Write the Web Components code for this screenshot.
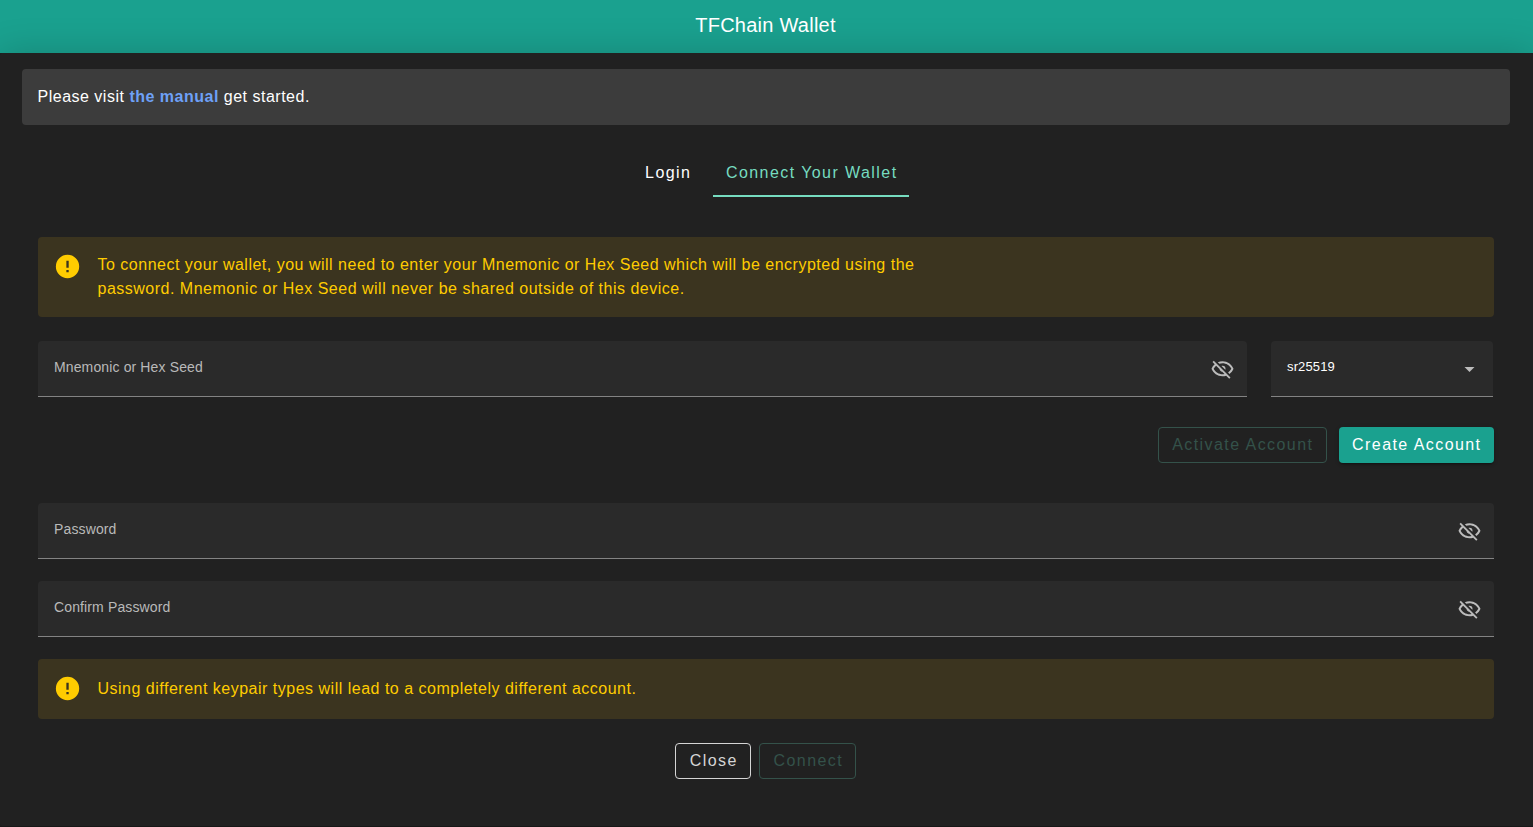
<!DOCTYPE html>
<html lang="en">
<head>
<meta charset="utf-8">
<title>TFChain Wallet</title>
<style>
html,body{margin:0;height:100%;background:#212121}
body{font-family:"Liberation Sans",Arial,sans-serif;color:#fff;overflow:hidden}
</style>
</head>
<body>
<wallet-app></wallet-app>
<script>
const define = (name, css, html) => customElements.define(name, class extends HTMLElement {
  constructor() {
    super();
    const t = document.createElement('template');
    t.innerHTML = `<style>*{box-sizing:border-box}:host{box-sizing:border-box}${css}</style>${typeof html === 'function' ? html(this) : html}`;
    this.attachShadow({ mode: 'open' }).append(t.content.cloneNode(true));
  }
});

const icons = {
  alert: 'M13,13H11V7H13M13,17H11V15H13M12,2A10,10 0 0,0 2,12A10,10 0 0,0 12,22A10,10 0 0,0 22,12A10,10 0 0,0 12,2Z',
  eyeOff: 'M2,5.27L3.28,4L20,20.72L18.73,22L15.65,18.92C14.5,19.3 13.28,19.5 12,19.5C7,19.5 2.73,16.39 1,12C1.69,10.24 2.79,8.69 4.19,7.46L2,5.27M12,9A3,3 0 0,1 15,12C15,12.35 14.94,12.69 14.83,13L11,9.17C11.31,9.06 11.65,9 12,9M12,4.5C17,4.5 21.27,7.61 23,12C22.18,14.08 20.79,15.88 19,17.19L17.58,15.76C18.94,14.82 20.06,13.54 20.82,12C19.17,8.64 15.76,6.5 12,6.5C10.91,6.5 9.84,6.68 8.84,7L7.3,5.47C8.74,4.85 10.33,4.5 12,4.5M3.18,12C4.83,15.36 8.24,17.5 12,17.5C12.69,17.5 13.37,17.43 14,17.29L11.72,15C10.29,14.85 9.15,13.71 9,12.28L5.6,8.87C4.61,9.72 3.78,10.78 3.18,12Z',
  menuDown: 'M7,10L12,15L17,10H7Z'
};
const origins = { alert: '.4 .4', eyeOff: '.5 .2', menuDown: '.5 0' };

define('wallet-icon',
  `:host{display:block;width:var(--size,24px);height:var(--size,24px);flex:none}svg{display:block;width:100%;height:100%}`,
  el => `<svg viewBox="${origins[el.getAttribute('name')]} 24 24" fill="currentColor"><path d="${icons[el.getAttribute('name')]}"/></svg>`);

define('wallet-header',
  `:host{display:flex;justify-content:center;height:53px;padding:9px 2px 0 0;background:#1aa18f;font-size:20px;line-height:32px;letter-spacing:.25px}`,
  `<slot></slot>`);

define('manual-banner',
  `:host{display:block;height:56px;margin:16px 23px 0 22px;padding:16px 15.5px;border-radius:4px;background:#3c3c3c;font-size:16px;line-height:24px;letter-spacing:.5px}
   ::slotted(b){color:#6ea1f7}`,
  `<slot></slot>`);

define('wallet-tab',
  `:host{display:flex;justify-content:center;align-items:center;height:48px;min-width:90px;padding-left:.5px;font-size:16px;letter-spacing:1.43px;white-space:nowrap}
   :host([active]){color:#76dcc0;border-bottom:2px solid #76dcc0;padding:2px 0 0 1.5px}`,
  `<slot></slot>`);

define('wallet-alert',
  `:host{display:flex;gap:16px;align-items:center;min-height:60px;padding:16px;border-radius:4px;background:#3b341f;color:#ffcc00;font-size:16px;line-height:24px;letter-spacing:.5px}
   :host([tall]){align-items:flex-start;height:80px}
   wallet-icon{--size:28px}`,
  `<wallet-icon name="alert"></wallet-icon><div><slot></slot></div>`);

define('wallet-field',
  `:host{display:flex;justify-content:space-between;height:56px;padding:0 12px 0 16.5px;border-radius:4px 4px 0 0;background:#2a2a2a;border-bottom:1px solid #838383;font-size:14px;line-height:20px;letter-spacing:.13px;color:#b9b9b9}
   span{margin-top:16px}
   wallet-icon{margin-top:16px;color:#bcbcbc}
   :host([select]){font-size:13px;color:#fff;padding-right:11px}`,
  el => `<span><slot></slot></span><wallet-icon name="${el.hasAttribute('select') ? 'menuDown' : 'eyeOff'}"></wallet-icon>`);

define('wallet-button',
  `:host{display:flex;justify-content:center;align-items:center;height:36px;padding-left:1.6px;border-radius:4px;border:1px solid currentColor;font-size:16px;letter-spacing:1.43px;color:#d5d5d5;white-space:nowrap}
   :host([disabled]){color:#34524a}
   :host([filled]){border:0;background:#1aa18f;color:#fff;box-shadow:0 3px 1px -2px #0003,0 2px 2px #00000024,0 1px 5px #0000001f}`,
  `<slot></slot>`);

define('wallet-app',
  `:host{display:block;height:827px;border-bottom:1px solid #1a1a1a}
   section{display:flow-root;height:773px;background:#212121;border-radius:2px;box-shadow:0 0 36px rgba(0,0,0,.18)}
   nav{display:flex;justify-content:center;margin:24px 0 0;padding:0 1px 0 0}
   main{display:flex;flex-direction:column;margin:40px 39.5px 0 37.5px}
   .seed{display:grid;grid-template-columns:1209px 222px;gap:24px;margin-top:24px}
   .account{display:flex;justify-content:flex-end;gap:12px;margin:30px 0 40px}
   .passwords{display:grid;gap:22px;margin-bottom:22px}
   .actions{display:flex;justify-content:center;gap:8px;margin-top:24px}`,
  `<wallet-header>TFChain Wallet</wallet-header>
   <section>
   <manual-banner>Please visit <b>the manual</b> get started.</manual-banner>
   <nav><wallet-tab>Login</wallet-tab><wallet-tab active style="width:196px">Connect Your Wallet</wallet-tab></nav>
   <main>
     <wallet-alert tall>To connect your wallet, you will need to enter your Mnemonic or Hex Seed which will be encrypted using the<br>password. Mnemonic or Hex Seed will never be shared outside of this device.</wallet-alert>
     <div class="seed"><wallet-field>Mnemonic or Hex Seed</wallet-field><wallet-field select>sr25519</wallet-field></div>
     <div class="account"><wallet-button disabled style="width:169px">Activate Account</wallet-button><wallet-button filled style="width:155px">Create Account</wallet-button></div>
     <div class="passwords"><wallet-field>Password</wallet-field><wallet-field>Confirm Password</wallet-field></div>
     <wallet-alert>Using different keypair types will lead to a completely different account.</wallet-alert>
     <div class="actions"><wallet-button style="width:76px">Close</wallet-button><wallet-button disabled style="width:97px">Connect</wallet-button></div>
   </main>
   </section>`);
</script>
</body>
</html>
